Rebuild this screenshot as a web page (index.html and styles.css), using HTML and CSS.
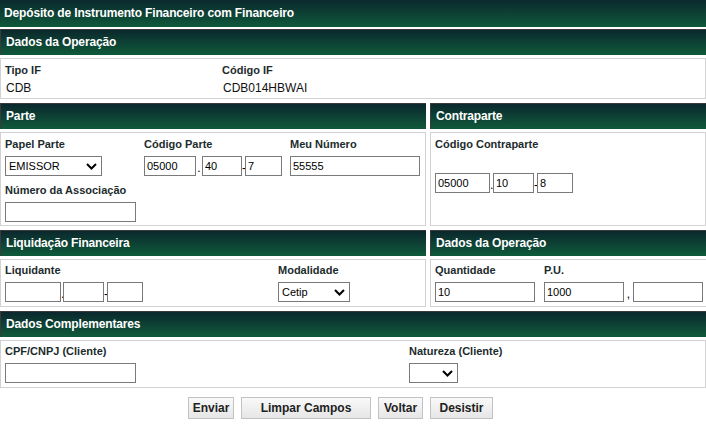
FILE: index.html
```html
<!DOCTYPE html>
<html lang="pt-BR">
<head>
<meta charset="utf-8">
<title>Depósito de Instrumento Financeiro com Financeiro</title>
<link rel="stylesheet" href="styles.css">
</head>
<body>
<div class="title">Depósito de Instrumento Financeiro com Financeiro</div>

<section class="sec">
  <div class="hd">Dados da Operação</div>
  <div class="panel panel-info">
    <div class="row">
      <div class="field f-tipo"><div class="lbl lbl-tight">Tipo IF</div><div class="val">CDB</div></div>
      <div class="field"><div class="lbl lbl-tight">Código IF</div><div class="val">CDB014HBWAI</div></div>
    </div>
  </div>
</section>

<div class="pair">
  <section class="sec">
    <div class="hd">Parte</div>
    <div class="panel panel-parte">
      <div class="row row-first">
        <div class="field f-papel">
          <div class="lbl">Papel Parte</div>
          <div class="sel w97"><span>EMISSOR</span><svg class="chev" width="11" height="7" viewBox="0 0 11 7"><path d="M1 1L5.5 5.5L10 1"/></svg></div>
        </div>
        <div class="field f-codparte">
          <div class="lbl">Código Parte</div>
          <div class="group"><input class="inp w52" value="05000"><span class="sep s6">.</span><input class="inp w40" value="40"><span class="sep s3">-</span><input class="inp w37" value="7"></div>
        </div>
        <div class="field">
          <div class="lbl">Meu Número</div>
          <input class="inp w130" value="55555">
        </div>
      </div>
      <div class="field">
        <div class="lbl">Número da Associação</div>
        <input class="inp w131" value="">
      </div>
    </div>
  </section>
  <section class="sec">
    <div class="hd">Contraparte</div>
    <div class="panel panel-parte">
      <div class="field">
        <div class="lbl">Código Contraparte</div>
        <div class="group group-low"><input class="inp w55" value="05000"><span class="sep s3">.</span><input class="inp w41" value="10"><span class="sep s3">-</span><input class="inp w36" value="8"></div>
      </div>
    </div>
  </section>
</div>

<div class="pair">
  <section class="sec">
    <div class="hd">Liquidação Financeira</div>
    <div class="panel panel-std">
      <div class="row">
        <div class="field f-liq">
          <div class="lbl">Liquidante</div>
          <div class="group"><input class="inp w56" value=""><span class="sep s2">.</span><input class="inp w41" value=""><span class="sep s3">-</span><input class="inp w36" value=""></div>
        </div>
        <div class="field">
          <div class="lbl">Modalidade</div>
          <div class="sel w72"><span>Cetip</span><svg class="chev" width="11" height="7" viewBox="0 0 11 7"><path d="M1 1L5.5 5.5L10 1"/></svg></div>
        </div>
      </div>
    </div>
  </section>
  <section class="sec">
    <div class="hd">Dados da Operação</div>
    <div class="panel panel-std">
      <div class="row">
        <div class="field f-qtd">
          <div class="lbl">Quantidade</div>
          <input class="inp w100" value="10">
        </div>
        <div class="field">
          <div class="lbl">P.U.</div>
          <div class="group"><input class="inp w80" value="1000"><span class="sep s9">,</span><input class="inp w70" value=""></div>
        </div>
      </div>
    </div>
  </section>
</div>

<section class="sec">
  <div class="hd">Dados Complementares</div>
  <div class="panel panel-std">
    <div class="row">
      <div class="field f-cpf">
        <div class="lbl">CPF/CNPJ (Cliente)</div>
        <input class="inp w131" value="">
      </div>
      <div class="field">
        <div class="lbl">Natureza (Cliente)</div>
        <div class="sel sel-empty w49"><svg class="chev" width="11" height="7" viewBox="0 0 11 7"><path d="M1 1L5.5 5.5L10 1"/></svg></div>
      </div>
    </div>
  </div>
</section>

<div class="actions">
  <button class="btn b-enviar">Enviar</button>
  <button class="btn b-limpar">Limpar Campos</button>
  <button class="btn b-voltar">Voltar</button>
  <button class="btn b-desistir">Desistir</button>
</div>
</body>
</html>
```

FILE: styles.css
```css
* { box-sizing: border-box; }

body {
  margin: 0;
  background: #fff;
  font-family: "Liberation Sans", Arial, sans-serif;
  font-size: 12px;
  color: #111;
}

.title {
  height: 27px;
  line-height: 27px;
  padding-left: 4px;
  margin-bottom: 2px;
  color: #fff;
  font-weight: bold;
  font-size: 12px;
  letter-spacing: -0.15px;
  background: linear-gradient(to bottom, #0b282d 0%, #0f5a3b 100%);
}

.sec {
  display: flex;
  flex-direction: column;
  margin-bottom: 4px;
}

.hd {
  height: 26px;
  line-height: 24px;
  padding-left: 5px;
  border-top: 1px solid #3a3a3a;
  border-left: 1px solid #3a3a3a;
  margin-bottom: 3px;
  color: #fff;
  font-weight: bold;
  font-size: 12px;
  letter-spacing: -0.15px;
  background: linear-gradient(to bottom, #0b282d 0%, #0f5a3b 100%);
}

.panel {
  flex: 1;
  border: 1px solid #d2d2d2;
  padding-left: 4px;
  padding-right: 4px;
}

.panel-info { padding-top: 4px; padding-bottom: 1px; }
.panel-parte { padding-top: 4px; padding-bottom: 3px; }
.panel-std { padding-top: 3px; padding-bottom: 4px; }

.row { display: flex; }
.row-first { margin-bottom: 7px; }

.field { display: flex; flex-direction: column; align-items: flex-start; }
.f-tipo { width: 217px; }
.f-papel { width: 139px; }
.f-codparte { width: 146px; }
.f-liq { width: 273px; }
.f-qtd { width: 109px; }
.f-cpf { width: 404px; }

.lbl {
  font-size: 11px;
  font-weight: bold;
  line-height: 14px;
  color: #1c2c2c;
  margin-bottom: 5px;
}
.lbl-tight { margin-bottom: 2px; }

.val {
  line-height: 18px;
  font-size: 12px;
  color: #111;
  padding-left: 1px;
}

.group { display: flex; align-items: flex-end; }
.group-low { margin-top: 17px; }

.inp {
  height: 20px;
  border: 1px solid #7a7a7a;
  border-radius: 0;
  padding: 0 2px;
  margin: 0;
  font-family: "Liberation Sans", Arial, sans-serif;
  font-size: 11px;
  color: #000;
  background: #fff;
  outline: none;
}

.sep {
  display: block;
  height: 16px;
  line-height: 16px;
  font-size: 12px;
  color: #000;
  overflow: hidden;
  text-align: center;
}
.s2 { width: 2px; }
.s3 { width: 3px; }
.s6 { width: 6px; }
.s9 { width: 9px; }

.sel {
  display: flex;
  align-items: center;
  justify-content: space-between;
  height: 20px;
  border: 1px solid #7a7a7a;
  padding: 0 4px 0 3px;
  font-family: "Liberation Sans", Arial, sans-serif;
  font-size: 11px;
  color: #000;
  background: #fff;
}
.sel-empty { justify-content: flex-end; }

.chev { display: block; }
.chev path { fill: none; stroke: #000; stroke-width: 2; }

.w36 { width: 36px; }
.w37 { width: 37px; }
.w40 { width: 40px; }
.w41 { width: 41px; }
.w49 { width: 49px; }
.w52 { width: 52px; }
.w55 { width: 55px; }
.w56 { width: 56px; }
.w70 { width: 70px; }
.w72 { width: 72px; }
.w80 { width: 80px; }
.w97 { width: 97px; }
.w100 { width: 100px; }
.w130 { width: 130px; }
.w131 { width: 131px; }

.pair {
  display: grid;
  grid-template-columns: 426px 1fr;
  column-gap: 4px;
}

.actions {
  display: flex;
  gap: 7px;
  margin-top: 9px;
  padding-left: 188px;
}

.btn {
  height: 22px;
  padding: 0;
  border: 1px solid #c2c2c2;
  border-radius: 0;
  background: linear-gradient(to bottom, #f9f9f9 0%, #e6e6e6 100%);
  font-family: "Liberation Sans", Arial, sans-serif;
  font-size: 12px;
  font-weight: bold;
  color: #222;
}
.b-enviar { width: 46px; }
.b-limpar { width: 130px; }
.b-voltar { width: 45px; }
.b-desistir { width: 63px; }
```
